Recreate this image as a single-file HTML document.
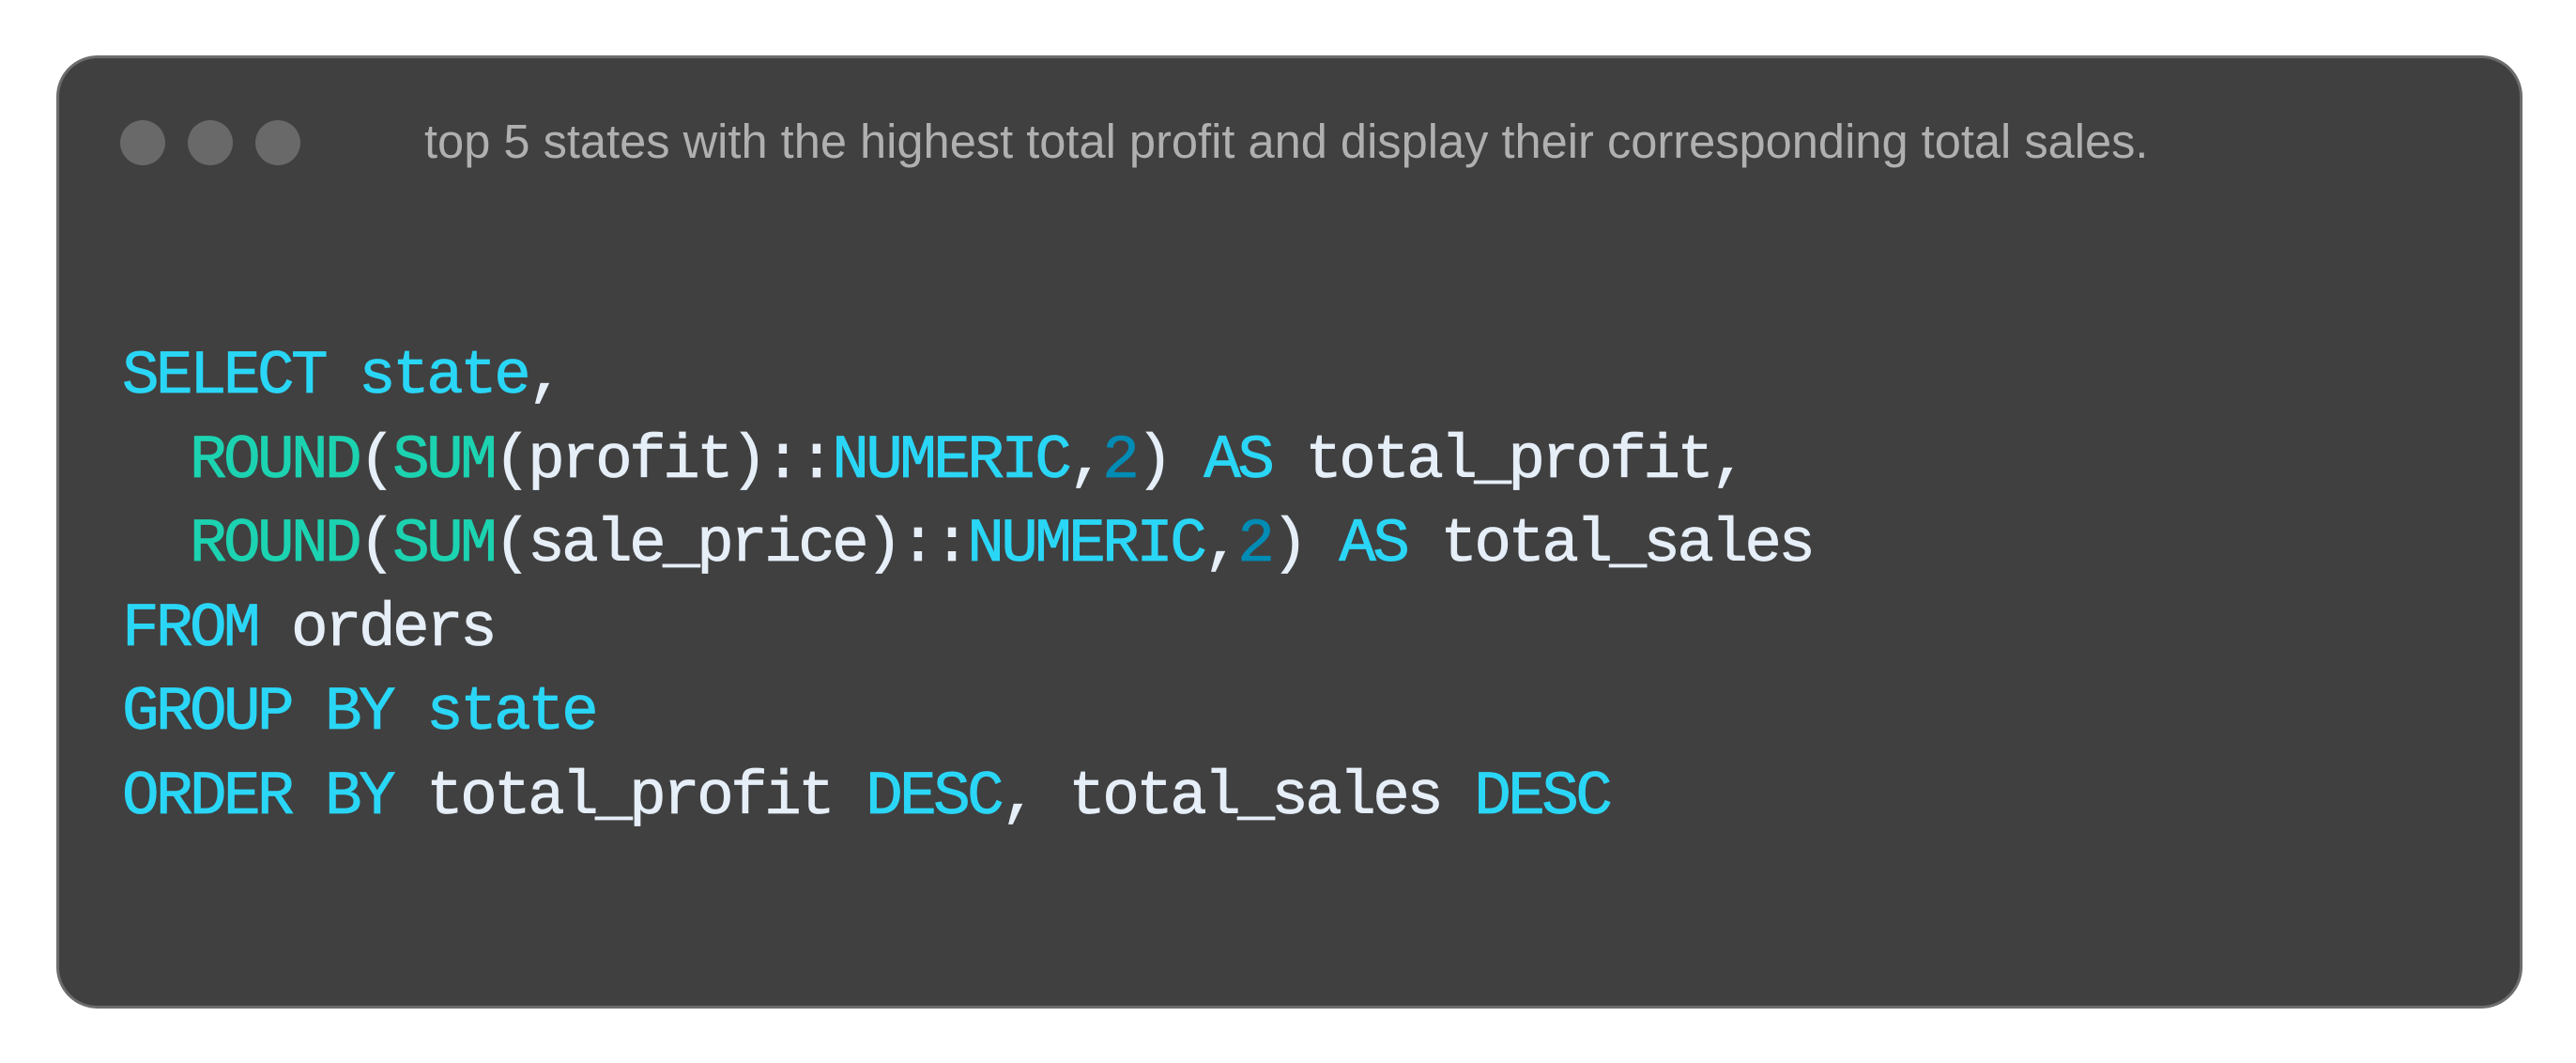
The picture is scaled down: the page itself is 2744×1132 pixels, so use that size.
<!DOCTYPE html>
<html><head><meta charset="utf-8"><style>
html,body{margin:0;padding:0;background:#fff;width:2744px;height:1132px;overflow:hidden}
.card{position:absolute;left:60px;top:59px;width:2627px;height:1015px;background:#404040;border:3px solid #6c6c6c;border-radius:44px;box-sizing:border-box}
.dot{position:absolute;top:128px;width:48px;height:48px;border-radius:50%;background:#696969}
.title{position:absolute;left:452px;top:116px;font:50.6px "Liberation Sans",sans-serif;color:#b0b0b0;white-space:nowrap;line-height:70px}
.code{position:absolute;left:130px;top:356px;font-family:"Liberation Mono",monospace;font-size:66px;letter-spacing:-3.6px;line-height:89.6px;color:#e6eef8;white-space:pre;margin:0;-webkit-text-stroke:0.8px currentColor}
.k{color:#2ad6f6}.f{color:#1cd3b1}.n{color:#008cb4}
</style></head><body>
<div class="card"></div>
<div class="dot" style="left:128px"></div>
<div class="dot" style="left:200px"></div>
<div class="dot" style="left:272px"></div>
<div class="title">top 5 states with the highest total profit and display their corresponding total sales.</div>
<pre class="code"><span class="k">SELECT</span> <span class="k">state</span>,
  <span class="f">ROUND</span>(<span class="f">SUM</span>(profit)::<span class="k">NUMERIC</span>,<span class="n">2</span>) <span class="k">AS</span> total_profit,
  <span class="f">ROUND</span>(<span class="f">SUM</span>(sale_price)::<span class="k">NUMERIC</span>,<span class="n">2</span>) <span class="k">AS</span> total_sales
<span class="k">FROM</span> orders
<span class="k">GROUP BY</span> <span class="k">state</span>
<span class="k">ORDER BY</span> total_profit <span class="k">DESC</span>, total_sales <span class="k">DESC</span></pre>
</body></html>
